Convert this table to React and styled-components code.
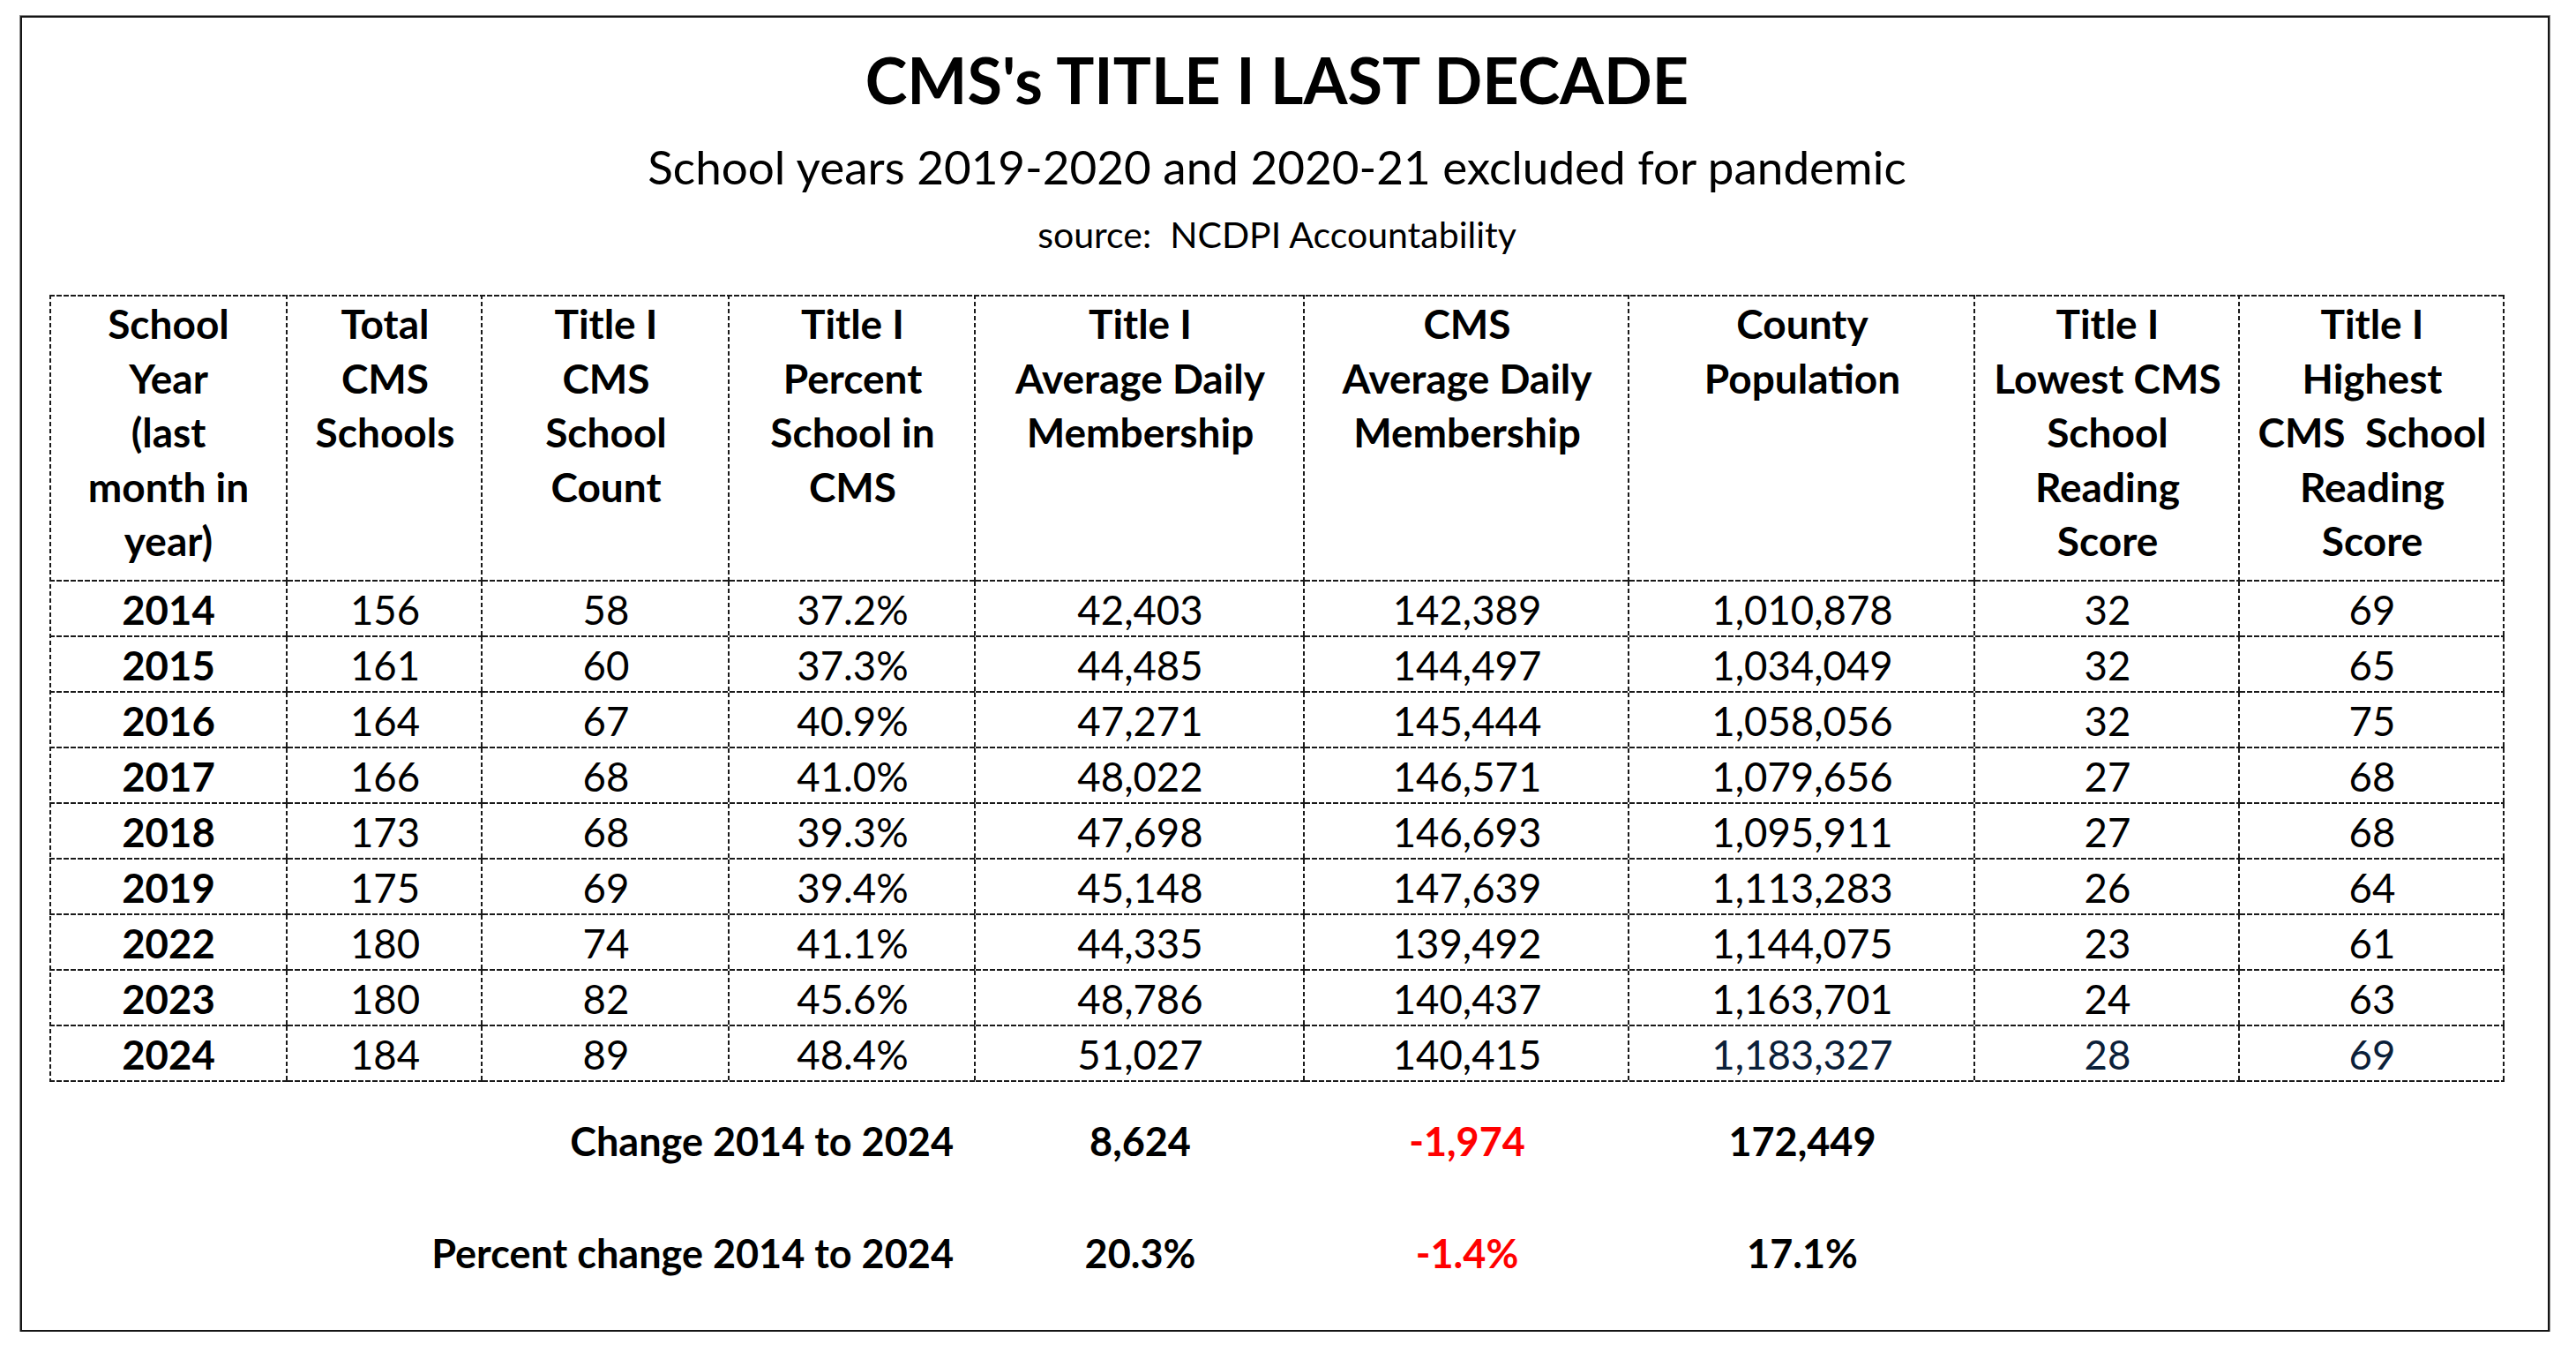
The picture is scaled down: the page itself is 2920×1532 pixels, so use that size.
import React from 'react'
import styled, { createGlobalStyle } from 'styled-components'

const GlobalStyle = createGlobalStyle`
    html, body {
        margin: 0;
        padding: 0;
        background: #fff;
    }
    body {
        font-family: Lato, "Open Sans", sans-serif;
        color: #000;
    }
`;

const COLS = '270px 221px 280px 279px 373px 368px 392px 300px 300px';

const Frame = styled.div`
    box-sizing: border-box;
    width: 2867px;
    height: 1491px;
    margin: 18px 0 0 23px;
    border: 2px solid #151515;
    outline: 1px solid #8a8a8a;
`;

const Sheet = styled.div`
    width: 2783px;
    margin-left: 31px;
    padding-top: 30px;
    display: flex;
    flex-direction: column;
    align-items: stretch;
`;

const Title = styled.h1`
    margin: 0;
    text-align: center;
    font-size: 72px;
    line-height: 80px;
    font-weight: 700;
`;

const Subtitle = styled.div`
    margin-top: 29px;
    text-align: center;
    font-size: 53px;
    line-height: 60px;
`;

const Source = styled.div`
    margin-top: 22px;
    text-align: center;
    font-size: 41px;
    line-height: 50px;
    white-space: pre;
`;

const dashH = 'repeating-linear-gradient(90deg, #1a1a1a 0 6px, transparent 6px 8px)';
const dashV = 'repeating-linear-gradient(180deg, #1a1a1a 0 5px, transparent 5px 8px)';

const Grid = styled.div`
    margin-top: 43px;
    display: grid;
    grid-template-columns: ${COLS};
    grid-template-rows: 325px;
    grid-auto-rows: 63px;
    background:
        ${dashH} left top / 100% 2px no-repeat,
        ${dashV} left top / 2px 100% no-repeat;
`;

const Cell = styled.div`
    display: flex;
    align-items: center;
    justify-content: center;
    font-size: 45.5px;
    font-weight: ${p => (p.$bold ? 700 : 400)};
    color: ${p => (p.$navy ? '#0b2039' : '#000')};
    background:
        ${dashH} left bottom / 100% 2px no-repeat,
        ${dashV} right top / 2px 100% no-repeat;
`;

const HeadCell = styled(Cell)`
    align-items: flex-start;
    padding-top: 2px;
    text-align: center;
    font-size: 46px;
    font-weight: 700;
    line-height: 61.5px;
    white-space: pre;
`;

const Summary = styled.div`
    margin-top: 3px;
    display: grid;
    grid-template-columns: 1050px 373px 368px 392px 600px;
    grid-auto-rows: 127px;
    font-size: 45px;
    font-weight: 700;
`;

const Label = styled.div`
    display: flex;
    align-items: center;
    justify-content: flex-end;
    padding-right: 25px;
`;

const Value = styled.div`
    display: flex;
    align-items: center;
    justify-content: center;
    color: ${p => (p.$red ? '#ff0000' : '#000')};
`;

const headers = [
    'School\nYear\n(last\nmonth in\nyear)',
    'Total\nCMS\nSchools',
    'Title I\nCMS\nSchool\nCount',
    'Title I\nPercent\nSchool in\nCMS',
    'Title I\nAverage Daily\nMembership',
    'CMS\nAverage Daily\nMembership',
    'County\nPopulation',
    'Title I\nLowest CMS\nSchool\nReading\nScore',
    'Title I\nHighest\nCMS  School\nReading\nScore',
];

const rows = [
    ['2014', '156', '58', '37.2%', '42,403', '142,389', '1,010,878', '32', '69'],
    ['2015', '161', '60', '37.3%', '44,485', '144,497', '1,034,049', '32', '65'],
    ['2016', '164', '67', '40.9%', '47,271', '145,444', '1,058,056', '32', '75'],
    ['2017', '166', '68', '41.0%', '48,022', '146,571', '1,079,656', '27', '68'],
    ['2018', '173', '68', '39.3%', '47,698', '146,693', '1,095,911', '27', '68'],
    ['2019', '175', '69', '39.4%', '45,148', '147,639', '1,113,283', '26', '64'],
    ['2022', '180', '74', '41.1%', '44,335', '139,492', '1,144,075', '23', '61'],
    ['2023', '180', '82', '45.6%', '48,786', '140,437', '1,163,701', '24', '63'],
    ['2024', '184', '89', '48.4%', '51,027', '140,415', '1,183,327', '28', '69'],
];

const summary = [
    { label: 'Change 2014 to 2024', values: ['8,624', '-1,974', '172,449'] },
    { label: 'Percent change 2014 to 2024', values: ['20.3%', '-1.4%', '17.1%'] },
];

export default function App() {
    return (
        <>
            <GlobalStyle />
            <Frame>
                <Sheet>
                    <Title>CMS's TITLE I LAST DECADE</Title>
                    <Subtitle>School years 2019-2020 and 2020-21 excluded for pandemic</Subtitle>
                    <Source>source:  NCDPI Accountability</Source>
                    <Grid>
                        {headers.map(h => (
                            <HeadCell key={h}>{h}</HeadCell>
                        ))}
                        {rows.map((r, i) =>
                            r.map((v, j) => (
                                <Cell
                                    key={`${i}-${j}`}
                                    $bold={j === 0}
                                    $navy={i === rows.length - 1 && j >= 6}
                                >
                                    {v}
                                </Cell>
                            ))
                        )}
                    </Grid>
                    <Summary>
                        {summary.map(s => (
                            <React.Fragment key={s.label}>
                                <Label>{s.label}</Label>
                                <Value>{s.values[0]}</Value>
                                <Value $red>{s.values[1]}</Value>
                                <Value>{s.values[2]}</Value>
                                <div />
                            </React.Fragment>
                        ))}
                    </Summary>
                </Sheet>
            </Frame>
        </>
    )
}
